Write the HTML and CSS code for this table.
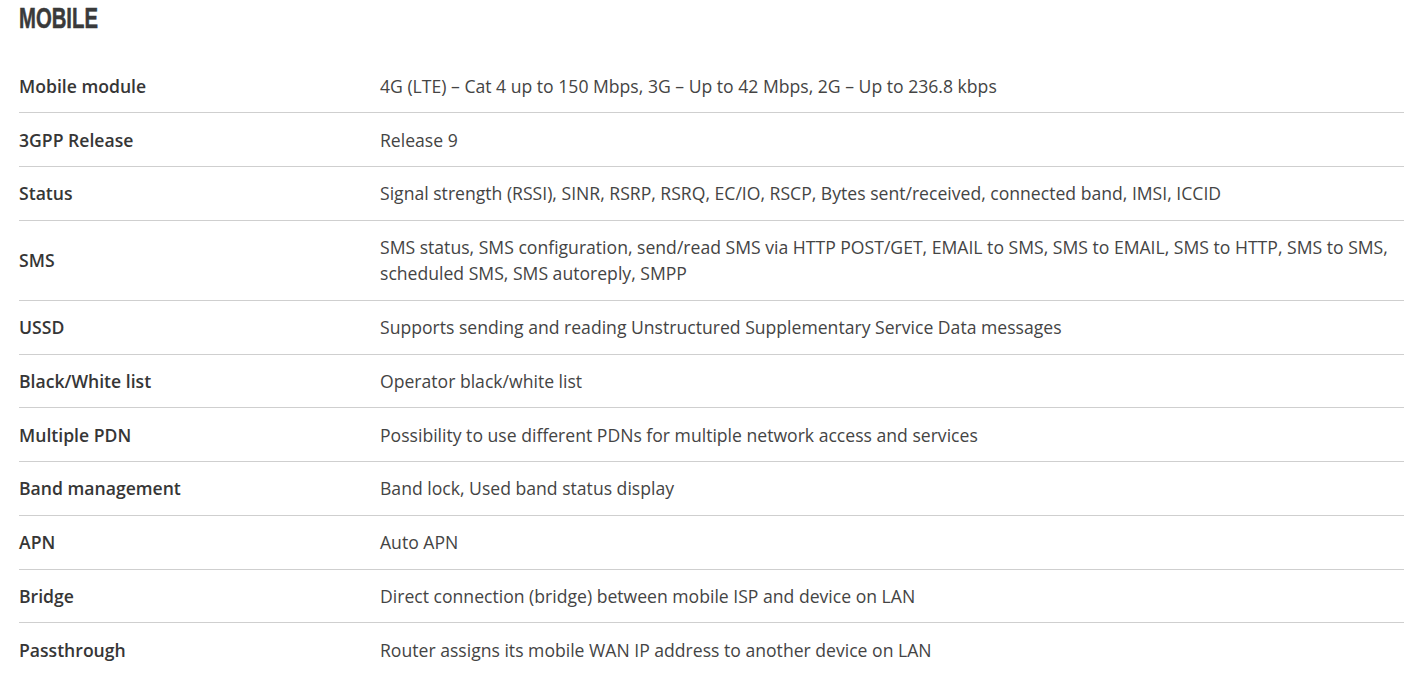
FILE: index.html
```html
<!DOCTYPE html>
<html lang="en">
<head>
    <meta charset="UTF-8">
    <meta name="viewport" content="width=device-width, initial-scale=1.0">
    <title>Mobile specifications</title>
    <link rel="stylesheet" href="styles.css">
</head>
<body>

    <div class="spec-section">
        <h2 class="spec-title">MOBILE</h2>

        <table class="spec-table">
            <tr>
                <th>Mobile module</th>
                <td>4G (LTE) – Cat 4 up to 150 Mbps, 3G – Up to 42 Mbps, 2G – Up to 236.8 kbps</td>
            </tr>
            <tr>
                <th>3GPP Release</th>
                <td>Release 9</td>
            </tr>
            <tr>
                <th>Status</th>
                <td>Signal strength (RSSI), SINR, RSRP, RSRQ, EC/IO, RSCP, Bytes sent/received, connected band, IMSI, ICCID</td>
            </tr>
            <tr>
                <th>SMS</th>
                <td>SMS status, SMS configuration, send/read SMS via HTTP POST/GET, EMAIL to SMS, SMS to EMAIL, SMS to HTTP, SMS to SMS, scheduled SMS, SMS autoreply, SMPP</td>
            </tr>
            <tr>
                <th>USSD</th>
                <td>Supports sending and reading Unstructured Supplementary Service Data messages</td>
            </tr>
            <tr>
                <th>Black/White list</th>
                <td>Operator black/white list</td>
            </tr>
            <tr>
                <th>Multiple PDN</th>
                <td>Possibility to use different PDNs for multiple network access and services</td>
            </tr>
            <tr>
                <th>Band management</th>
                <td>Band lock, Used band status display</td>
            </tr>
            <tr>
                <th>APN</th>
                <td>Auto APN</td>
            </tr>
            <tr>
                <th>Bridge</th>
                <td>Direct connection (bridge) between mobile ISP and device on LAN</td>
            </tr>
            <tr>
                <th>Passthrough</th>
                <td>Router assigns its mobile WAN IP address to another device on LAN</td>
            </tr>
        </table>
    </div>

</body>
</html>
```

FILE: styles.css
```css
body {
    font-family: 'Open Sans', 'Liberation Sans', sans-serif;
    background-color: #ffffff;
    color: #3d3d3d;
    margin: 0;
    padding: 0;
}

.spec-section {
    padding: 0 12px 0 19px;
}

.spec-title {
    font-family: 'Liberation Sans', sans-serif;
    font-weight: bold;
    font-size: 29px;
    line-height: 34px;
    color: #3a3a3a;
    -webkit-text-stroke: 0.5px #3a3a3a;
    margin: 0;
    padding-top: 1px;
    display: inline-block;
    transform: scaleX(0.7);
    transform-origin: left center;
}

.spec-table {
    width: 100%;
    border-collapse: collapse;
    margin-top: 24.5px;
    font-size: 17.6px;
    line-height: 26.25px;
}

.spec-table tr {
    border-bottom: 1px solid #cfcfcf;
}

.spec-table tr:last-child {
    border-bottom: none;
}

.spec-table th,
.spec-table td {
    padding: 13.25px 0;
    text-align: left;
    vertical-align: middle;
}

.spec-table th {
    width: 361px;
    font-weight: 600;
    color: #363636;
}

.spec-table td {
    font-weight: 400;
    color: #444444;
}
```
